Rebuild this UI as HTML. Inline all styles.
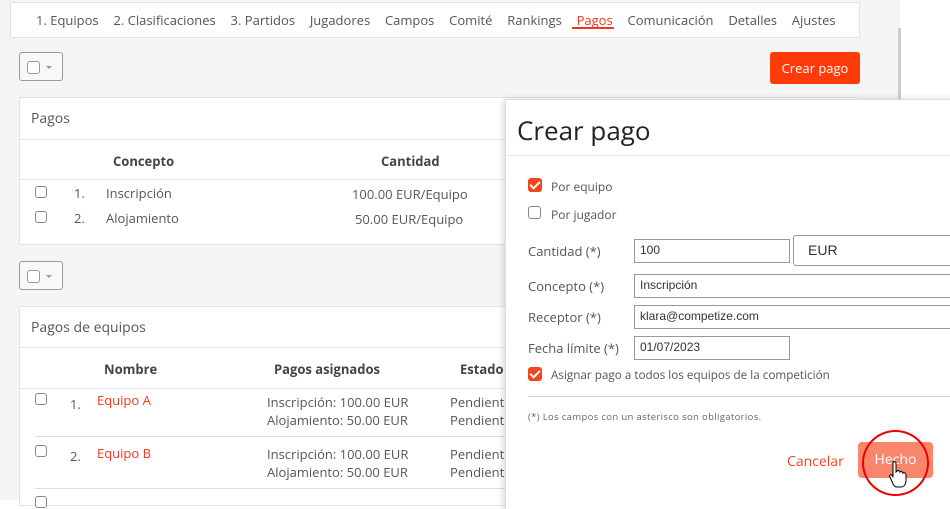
<!DOCTYPE html>
<html><head><meta charset="utf-8"><style>
*{box-sizing:border-box;margin:0;padding:0}
body{width:950px;height:500px;overflow:hidden;background:#fff;font-family:"Open Sans","Liberation Sans",sans-serif;color:#555;position:relative;font-size:13px}
.bg{position:absolute;left:0;top:0;width:900px;height:500px;background:#f5f5f5}
.sb{position:absolute;left:898px;top:28px;width:3px;height:72px;background:#ccc}
.a{position:absolute;white-space:nowrap}
.card{position:absolute;background:#fff;border:1px solid #e3e3e3;border-radius:2px}
.nav span{margin-right:14.8px}
.drop{position:absolute;width:44px;height:29px;border:1px solid #999;border-radius:3px;background:#f8f8f8}
.drop:before{content:"";position:absolute;left:7px;top:8px;width:11px;height:11px;border:1px solid #999;border-radius:3px;background:#fff}
.drop:after{content:"";position:absolute;left:26px;top:13px;border:3px solid transparent;border-top:3px solid #999}
.cb{position:absolute;width:12px;height:12px;border:1px solid #888;border-radius:3px;background:#fff}
.hl{position:absolute;height:1px;background:#e5e5e5}
.red{color:#f5361b}
.inp{position:absolute;height:24px;border:1px solid #999;background:#fff;font-family:"Liberation Sans",sans-serif;font-size:12px;color:#333;padding:3px 5px}
.ck{position:absolute;width:14px;height:14px;background:#f5431d;border-radius:3px}
.ck:after{content:"";position:absolute;left:4px;top:1px;width:4px;height:8px;border:solid #fff;border-width:0 2px 2px 0;transform:rotate(45deg)}
</style></head><body>
<div class="bg"></div><div class="sb"></div>
<div class="card" style="left:10px;top:2px;width:850px;height:36px"></div>
<div class="a nav" style="left:36px;top:11px;font-size:13px;color:#555"><span>1. Equipos</span><span>2. Clasificaciones</span><span>3. Partidos</span><span>Jugadores</span><span>Campos</span><span>Comité</span><span>Rankings</span><span class="red">Pagos</span><span>Comunicación</span><span>Detalles</span><span>Ajustes</span></div>
<div class="a" style="left:572px;top:27px;width:42px;height:2px;background:#f5361b"></div>
<div class="drop" style="left:19px;top:52px"></div>
<div class="a" style="left:770px;top:52px;width:90px;height:32px;background:#ff3b0a;border-radius:3px;color:#fff;font-size:13px;text-align:center;line-height:32px">Crear pago</div>
<div class="card" style="left:19px;top:97px;width:841px;height:148px"></div>
<div class="a" style="left:31px;top:109px;font-size:14px">Pagos</div>
<div class="hl" style="left:20px;top:139px;width:490px"></div>
<div class="a" style="left:113px;top:152px;font-weight:bold;color:#444">Concepto</div>
<div class="a" style="left:381px;top:152px;font-weight:bold;color:#444">Cantidad</div>
<div class="hl" style="left:20px;top:179px;width:490px"></div>
<div class="cb" style="left:35px;top:186px"></div><div class="a" style="left:74px;top:184px">1.</div><div class="a" style="left:106px;top:184px">Inscripción</div><div class="a" style="left:352px;top:185px">100.00 EUR/Equipo</div>
<div class="cb" style="left:35px;top:211px"></div><div class="a" style="left:74px;top:209px">2.</div><div class="a" style="left:106px;top:209px">Alojamiento</div><div class="a" style="left:355px;top:210px">50.00 EUR/Equipo</div>
<div class="drop" style="left:19px;top:261px"></div>
<div class="card" style="left:19px;top:306px;width:841px;height:200px"></div>
<div class="a" style="left:31px;top:318px;font-size:14px">Pagos de equipos</div>
<div class="hl" style="left:20px;top:347px;width:490px"></div>
<div class="a" style="left:104px;top:360px;font-weight:bold;color:#444">Nombre</div>
<div class="a" style="left:274px;top:360px;font-weight:bold;color:#444">Pagos asignados</div>
<div class="a" style="left:460px;top:360px;font-weight:bold;color:#444">Estado</div>
<div class="hl" style="left:20px;top:388px;width:490px"></div>
<div class="cb" style="left:35px;top:393px"></div><div class="a" style="left:70px;top:395px">1.</div><div class="a red" style="left:97px;top:391px">Equipo A</div>
<div class="a" style="left:267px;top:393px;line-height:18px">Inscripción: 100.00 EUR<br>Alojamiento: 50.00 EUR</div>
<div class="a" style="left:450px;top:393px;line-height:18px">Pendiente<br>Pendiente</div>
<div class="hl" style="left:35px;top:436px;width:475px;background:#ddd"></div>
<div class="cb" style="left:35px;top:445px"></div><div class="a" style="left:70px;top:447px">2.</div><div class="a red" style="left:97px;top:444px">Equipo B</div>
<div class="a" style="left:267px;top:445px;line-height:18px">Inscripción: 100.00 EUR<br>Alojamiento: 50.00 EUR</div>
<div class="a" style="left:450px;top:445px;line-height:18px">Pendiente<br>Pendiente</div>
<div class="hl" style="left:35px;top:488px;width:475px;background:#ddd"></div>
<div class="cb" style="left:35px;top:496px"></div>
<!-- modal -->
<div class="a" style="left:505px;top:99px;width:460px;height:410px;background:#fff;border-left:1px solid #ddd;border-top:1px solid #ddd;box-shadow:-2px 0 6px rgba(0,0,0,.15)"></div>
<div class="a" style="left:517px;top:112px;font-size:26px;color:#222">Crear pago</div>
<div class="hl" style="left:506px;top:155px;width:444px"></div>
<div class="ck" style="left:528px;top:178px"></div><div class="a" style="left:551px;top:178px;font-size:12px">Por equipo</div>
<div class="cb" style="left:528px;top:206px;width:13px;height:13px"></div><div class="a" style="left:551px;top:206px;font-size:12px">Por jugador</div>
<div class="a" style="left:528px;top:242px">Cantidad (*)</div>
<div class="inp" style="left:634px;top:239px;width:156px">100</div>
<div class="inp" style="left:793px;top:235px;width:170px;height:31px;border-radius:3px;font-size:14px;padding:6px 14px">EUR</div>
<div class="a" style="left:528px;top:277px">Concepto (*)</div>
<div class="inp" style="left:634px;top:274px;width:330px">Inscripción</div>
<div class="a" style="left:528px;top:308px">Receptor (*)</div>
<div class="inp" style="left:634px;top:305px;width:330px">klara@competize.com</div>
<div class="a" style="left:528px;top:339px">Fecha límite (*)</div>
<div class="inp" style="left:634px;top:336px;width:156px">01/07/2023</div>
<div class="ck" style="left:528px;top:367px"></div><div class="a" style="left:551px;top:367px;font-size:11.7px">Asignar pago a todos los equipos de la competición</div>
<div class="hl" style="left:528px;top:396px;width:422px;background:#ccc"></div>
<div class="a" style="left:528px;top:410px;font-size:9.5px;letter-spacing:0.35px;color:#666">(*) Los campos con un asterisco son obligatorios.</div>
<div class="a" style="left:787px;top:452px;font-size:14px;color:#f5431d">Cancelar</div>
<div class="a" style="left:858px;top:442px;width:75px;height:36px;background:#f9866c;border-radius:4px;color:#fff;font-size:14px;text-align:center;line-height:36px">Hecho</div>
<div class="a" style="left:862px;top:430px;width:67px;height:66px;border:2px solid #e00;border-radius:50%"></div>
<svg class="a" style="left:888px;top:460px" width="22" height="28" viewBox="0 0 22 28"><path d="M5 2c1-1 3 0 3 1v9l1-1c1-1 3 0 3 1 1-1 3 0 3 1 1-1 3 0 3 2v6c0 3-2 6-5 6H9c-2 0-3-1-4-3L2 17c-1-1 0-3 2-2l1 2V3z" fill="#fff" stroke="#000" stroke-width="1"/></svg>
</body></html>
